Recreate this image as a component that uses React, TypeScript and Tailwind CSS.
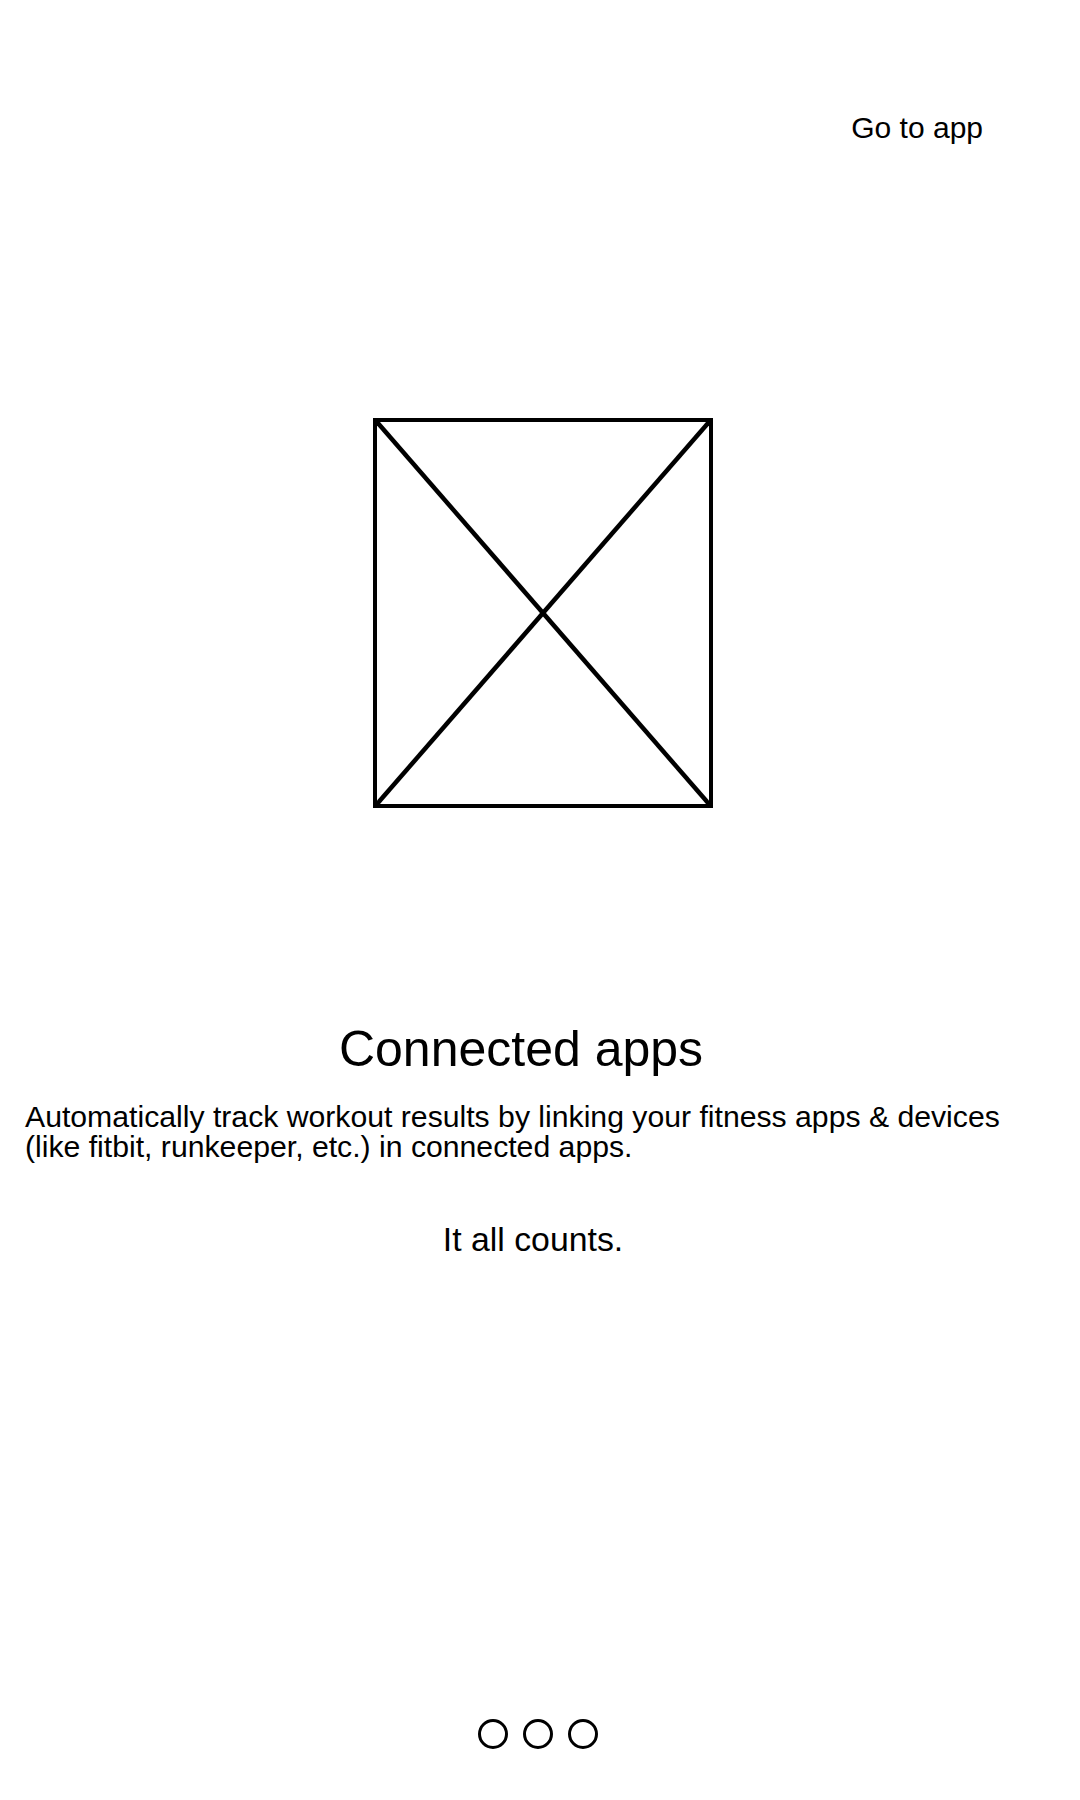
import React from "react";

const FONT = "font-['Liberation_Sans',Arial,sans-serif]";

function PlaceholderImage() {
    return (
        <div className="relative w-[340px] h-[390px] border-[4px] border-black">
            <svg className="absolute inset-0 w-full h-full" viewBox="0 0 332 382" preserveAspectRatio="none">
                <line x1="0" y1="0" x2="332" y2="382" stroke="black" strokeWidth="4.5" />
                <line x1="332" y1="0" x2="0" y2="382" stroke="black" strokeWidth="4.5" />
            </svg>
        </div>
    )
}

function PageDots({ count = 3 }: { count?: number }) {
    return (
        <div className="flex justify-center gap-[15px] pr-[4px]">
            {Array.from({ length: count }).map((_, i) => (
                <span key={i} className="block w-[30px] h-[30px] rounded-full border-[3px] border-black" />
            ))}
        </div>
    )
}

export default function App() {
    return (
        <div className={FONT + " w-[1080px] min-h-[1800px] bg-white text-black flex flex-col"}>
            <div className="flex justify-end pr-[97px] mt-[113px]">
                <a href="#" className="text-[30px] leading-[30px]">Go to app</a>
            </div>

            <div className="flex justify-center pl-[6px] mt-[275px]">
                <PlaceholderImage />
            </div>

            <h1 className="text-center text-[50px] leading-[50px] pr-[38px] mt-[216px]">Connected apps</h1>

            <p className="w-[1015px] pl-[25px] text-[30.2px] leading-[30px] mt-[28px]">
                Automatically track workout results by linking your fitness apps &amp; devices (like fitbit, runkeeper, etc.) in connected apps.
            </p>

            <p className="text-center text-[33.8px] leading-[34px] pr-[14px] mt-[60px]">It all counts.</p>

            <div className="mt-[463px]">
                <PageDots />
            </div>
        </div>
    )
}
